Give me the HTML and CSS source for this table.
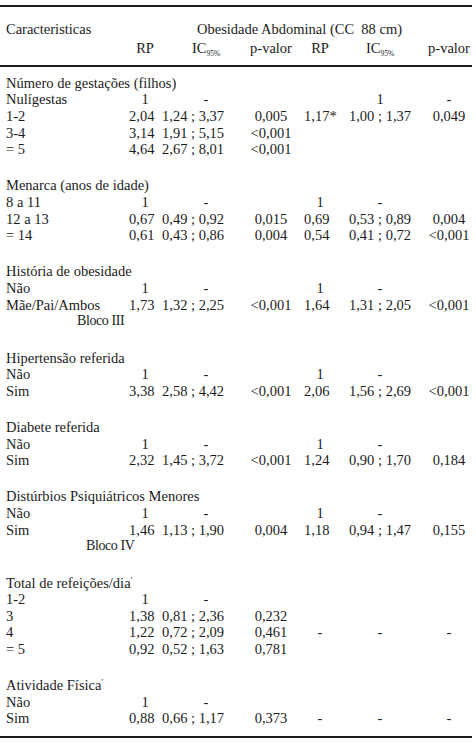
FILE: index.html
```html
<!DOCTYPE html>
<html lang="pt">
<head>
<meta charset="utf-8">
<link rel="stylesheet" href="styles.css">
</head>
<body>
<div class="tbl">
  <div class="rule rule-top"></div>
  <div class="grid head">
    <div class="l">Caracteristicas</div>
    <div class="obes">Obesidade Abdominal (CC&nbsp; 88 cm)</div>
    <div class="ac r2">RP</div>
    <div class="bh">IC<sub>95%</sub></div>
    <div class="c">p-valor</div>
    <div class="dc">RP</div>
    <div class="e">IC<sub>95%</sub></div>
    <div class="f">p-valor</div>
  </div>
  <div class="rule rule-mid"></div>
  <div class="body">
    <div class="grid grp">
      <div class="gh">Número de gestações (filhos)</div>
      <div class="l">Nulígestas</div><div class="ac">1</div><div class="bh">-</div><div class="e">1</div><div class="f">-</div>
      <div class="l">1-2</div><div class="a">2,04</div><div class="b">1,24 ; 3,37</div><div class="c">0,005</div><div class="d">1,17*</div><div class="e">1,00 ; 1,37</div><div class="f">0,049</div>
      <div class="l">3-4</div><div class="a">3,14</div><div class="b">1,91 ; 5,15</div><div class="c">&lt;0,001</div>
      <div class="l">= 5</div><div class="a">4,64</div><div class="b">2,67 ; 8,01</div><div class="c">&lt;0,001</div>
    </div>
    <div class="grid grp">
      <div class="gh">Menarca (anos de idade)</div>
      <div class="l">8 a 11</div><div class="ac">1</div><div class="bh">-</div><div class="dc">1</div><div class="e">-</div>
      <div class="l">12 a 13</div><div class="a">0,67</div><div class="b">0,49 ; 0,92</div><div class="c">0,015</div><div class="d">0,69</div><div class="e">0,53 ; 0,89</div><div class="f">0,004</div>
      <div class="l">= 14</div><div class="a">0,61</div><div class="b">0,43 ; 0,86</div><div class="c">0,004</div><div class="d">0,54</div><div class="e">0,41 ; 0,72</div><div class="f">&lt;0,001</div>
    </div>
    <div class="grid grp">
      <div class="gh">História de obesidade</div>
      <div class="l">Não</div><div class="ac">1</div><div class="bh">-</div><div class="dc">1</div><div class="e">-</div>
      <div class="l">Mãe/Pai/Ambos</div><div class="a">1,73</div><div class="b">1,32 ; 2,25</div><div class="c">&lt;0,001</div><div class="d">1,64</div><div class="e">1,31 ; 2,05</div><div class="f">&lt;0,001</div>
      <div class="l bloco bloco3">Bloco III</div>
    </div>
    <div class="grid grp">
      <div class="gh">Hipertensão referida</div>
      <div class="l">Não</div><div class="ac">1</div><div class="bh">-</div><div class="dc">1</div><div class="e">-</div>
      <div class="l">Sim</div><div class="a">3,38</div><div class="b">2,58 ; 4,42</div><div class="c">&lt;0,001</div><div class="d">2,06</div><div class="e">1,56 ; 2,69</div><div class="f">&lt;0,001</div>
    </div>
    <div class="grid grp">
      <div class="gh">Diabete referida</div>
      <div class="l">Não</div><div class="ac">1</div><div class="bh">-</div><div class="dc">1</div><div class="e">-</div>
      <div class="l">Sim</div><div class="a">2,32</div><div class="b">1,45 ; 3,72</div><div class="c">&lt;0,001</div><div class="d">1,24</div><div class="e">0,90 ; 1,70</div><div class="f">0,184</div>
    </div>
    <div class="grid grp">
      <div class="gh">Distúrbios Psiquiátricos Menores</div>
      <div class="l">Não</div><div class="ac">1</div><div class="bh">-</div><div class="dc">1</div><div class="e">-</div>
      <div class="l">Sim</div><div class="a">1,46</div><div class="b">1,13 ; 1,90</div><div class="c">0,004</div><div class="d">1,18</div><div class="e">0,94 ; 1,47</div><div class="f">0,155</div>
      <div class="l bloco bloco4">Bloco IV</div>
    </div>
    <div class="grid grp">
      <div class="gh">Total de refeições/dia<sup>'</sup></div>
      <div class="l">1-2</div><div class="ac">1</div><div class="bh">-</div>
      <div class="l">3</div><div class="a">1,38</div><div class="b">0,81 ; 2,36</div><div class="c">0,232</div>
      <div class="l">4</div><div class="a">1,22</div><div class="b">0,72 ; 2,09</div><div class="c">0,461</div><div class="dc">-</div><div class="e">-</div><div class="f">-</div>
      <div class="l">= 5</div><div class="a">0,92</div><div class="b">0,52 ; 1,63</div><div class="c">0,781</div>
    </div>
    <div class="grid grp">
      <div class="gh">Atividade Física<sup>'</sup></div>
      <div class="l">Não</div><div class="ac">1</div><div class="bh">-</div>
      <div class="l">Sim</div><div class="a">0,88</div><div class="b">0,66 ; 1,17</div><div class="c">0,373</div><div class="dc">-</div><div class="e">-</div><div class="f">-</div>
    </div>
  </div>
  <div class="rule rule-bottom"></div>
</div>
</body>
</html>
```

FILE: styles.css
```css
html, body {
  margin: 0;
  padding: 0;
  background: #ffffff;
}

body {
  font-family: "Liberation Serif", "Times New Roman", serif;
  font-size: 14.5px;
  line-height: 16.6px;
  color: #1c1c1c;
}

.tbl {
  width: 476px;
  padding-top: 5px;
}

.rule {
  width: 472px;
  height: 2px;
  background: #1c1c1c;
}

.grid {
  display: grid;
  grid-template-columns: 128px 31px 81px 62px 36px 84px 54px;
  white-space: nowrap;
}

.head {
  margin-top: 13.7px;
  margin-bottom: 8.2px;
  row-gap: 3px;
}

.body {
  margin-top: 7.7px;
  margin-bottom: 9px;
  display: flex;
  flex-direction: column;
  gap: 19.7px;
}

.gh {
  grid-column: 1 / -1;
  padding-left: 6px;
}

.l {
  grid-column: 1;
  padding-left: 6px;
}

.obes {
  grid-column: 3 / -1;
  padding-left: 38px;
}

.a {
  grid-column: 2;
  padding-left: 1px;
}

.ac {
  grid-column: 2;
  padding-left: 3px;
  text-align: center;
}

.b {
  grid-column: 3;
  padding-left: 3px;
}

.bh {
  grid-column: 3;
  padding-left: 13px;
  text-align: center;
}

.c {
  grid-column: 4;
  text-align: center;
}

.d {
  grid-column: 5;
  padding-left: 2px;
}

.dc {
  grid-column: 5;
  text-align: center;
}

.e {
  grid-column: 6;
  text-align: center;
}

.f {
  grid-column: 7;
  text-align: center;
}

.r2 {
  grid-column: 2;
}

sub {
  font-size: 7.5px;
  line-height: 0;
  vertical-align: -3px;
}

sup {
  font-size: 9px;
  line-height: 0;
  vertical-align: 5px;
}

.bloco {
  font-size: 14px;
  letter-spacing: -0.4px;
}

.bloco3 {
  padding-left: 77px;
}

.bloco4 {
  padding-left: 86px;
}
```
